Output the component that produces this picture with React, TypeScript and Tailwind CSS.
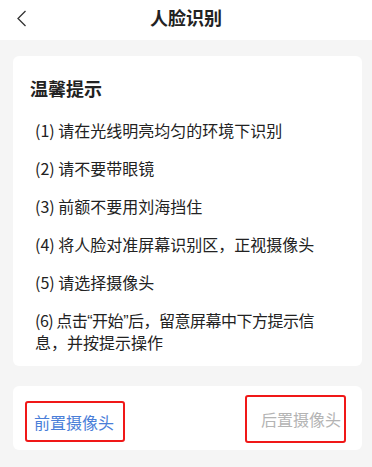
import React from 'react';

const narrow = { fontFamily: '"Liberation Sans", sans-serif' };

const tips: React.ReactNode[] = [
  '(1) 请在光线明亮均匀的环境下识别',
  '(2) 请不要带眼镜',
  '(3) 前额不要用刘海挡住',
  '(4) 将人脸对准屏幕识别区，正视摄像头',
  '(5) 请选择摄像头',
  <>
    <span className="block whitespace-nowrap tracking-[-0.5px]">
      (6) 点击<span style={narrow}>“</span>开始<span style={narrow}>”</span>后，留意屏幕中下方提示信
    </span>
    <span className="block whitespace-nowrap">息，并按提示操作</span>
  </>,
];

export default function App() {
  return (
    <div
      className="w-[372px] h-[467px] overflow-hidden bg-[#f5f5f5] text-[#222]"
      style={{ fontFamily: '"Noto Sans CJK SC", "Noto Sans", sans-serif' }}
    >
      {/* top bar */}
      <div className="relative h-[40px] bg-white flex items-center justify-center">
        <svg
          className="absolute left-[16px] top-[10px]"
          width="11"
          height="17"
          viewBox="0 0 11 17"
          fill="none"
        >
          <path d="M9.5 1 L2 8.5 L9.5 16" stroke="#333" strokeWidth="1.3" />
        </svg>
        <span className="text-[18px] font-bold leading-[24px] -mt-[6px]">人脸识别</span>
      </div>

      {/* tips card */}
      <div className="mt-[16px] ml-[13px] mr-[10px] bg-white rounded-[6px] pt-[20px] pb-[14px] pl-[17px]">
        <div className="text-[18px] font-bold leading-[24px]">温馨提示</div>
        <div className="mt-[20px] pl-[5px] flex flex-col gap-[18px]">
          {tips.map((t, i) => (
            <div key={i} className="text-[16px] leading-[20px]">
              {t}
            </div>
          ))}
        </div>
      </div>

      {/* camera switch */}
      <div className="mt-[20px] ml-[13px] mr-[10px] h-[64px] bg-white rounded-[6px] flex justify-between pl-[12px] pr-[16px]">
        <div className="mt-[15px] w-[100px] h-[41px] border-2 border-[#f01818] rounded-[3px] flex items-center pl-[7px]">
          <span className="text-[16px] leading-[20px] text-[#4a7ed8]">前置摄像头</span>
        </div>
        <div className="mt-[9px] w-[101px] h-[48px] border-2 border-[#f01818] rounded-[3px] flex items-center pl-[14px]">
          <span className="text-[16px] leading-[20px] text-[#b4b4b4]">后置摄像头</span>
        </div>
      </div>
    </div>
  );
}
